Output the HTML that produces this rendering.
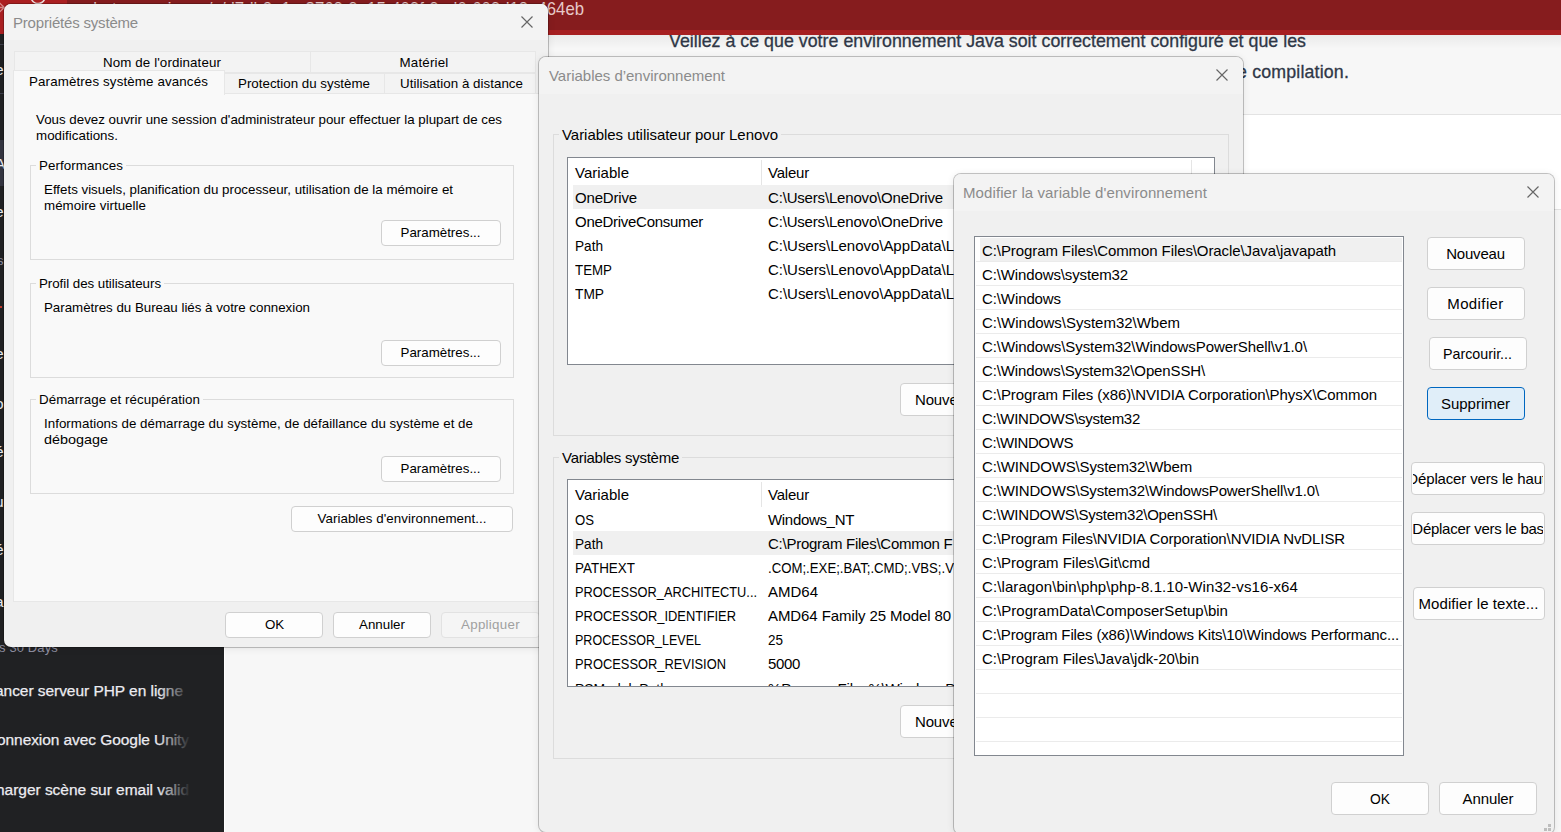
<!DOCTYPE html>
<html lang="fr"><head><meta charset="utf-8"><title>Variables d’environnement</title>
<style>

*{box-sizing:border-box;margin:0;padding:0}
html,body{width:1561px;height:832px;overflow:hidden;background:#f7f7f7}
body{position:relative;font-family:"Liberation Sans",sans-serif;font-size:15px;line-height:21px;color:#000}
div,span{position:absolute}
.t{white-space:pre}
.dlg{border:1px solid rgba(0,0,0,.22);border-radius:8px;background:#f0f0f0;background-clip:padding-box;box-shadow:0 1px 7px rgba(0,0,0,.08)}
.btn{background:#fdfdfd;border:1px solid #d0d0d0;border-radius:4px}
.btn.foc{background:#e0eef9;border-color:#0067c0}
.btn.dis{background:#f5f5f5;border-color:#e2e2e2}
.grp{border:1px solid #dcdcdc}
.lv{background:#fff;border:1px solid #82878f}
.sep{background:#ebebeb;height:1px}

</style></head><body>
<div style="left:0px;top:34px;width:1561px;height:80px;background:#f7f7f7"></div>
<div style="left:0px;top:114px;width:1561px;height:1px;background:#e3e3e3"></div>
<div style="left:0px;top:115px;width:1561px;height:717px;background:#fff"></div>
<div style="left:1548px;top:209px;width:13px;height:623px;background:#f7f7f7;border-top:1px solid #e3e3e3"></div>
<span class="t" style="left:669.00px;top:29.2px;font-size:17.8px;line-height:25px;color:#2f3747;letter-spacing:0.018px;-webkit-text-stroke:.3px #2f3747;">Veillez à ce que votre environnement Java soit correctement configuré et que les</span>
<span class="t" style="left:1237.00px;top:60.2px;font-size:17.8px;line-height:25px;color:#2f3747;letter-spacing:0.163px;-webkit-text-stroke:.3px #2f3747;">e compilation.</span>
<div style="left:0px;top:35px;width:1561px;height:14px;background:linear-gradient(rgba(0,0,0,.05),rgba(0,0,0,0))"></div>
<div style="left:0px;top:0px;width:1561px;height:30px;background:#861c1e"></div>
<div style="left:0px;top:30px;width:1561px;height:5px;background:#a61f21"></div>
<div style="left:0px;top:0px;width:67px;height:35px;background:#ad2022"></div>
<span class="t" style="left:85.00px;top:-5.5px;font-size:19px;line-height:27px;color:#e6c9c9;transform:scaleX(0.8813);transform-origin:0 0;">chat.openai.com/c/d7db2a1e-8763-9e15-409f-9ad0-609d13e464eb</span>
<svg style="position:absolute;left:29px;top:-12px" width="18" height="18" viewBox="0 0 18 18"><path d="M15 5A7 7 0 1 0 16 9M15 0V5H10" stroke="#f0dede" stroke-width="1.6" fill="none"/></svg>
<svg style="position:absolute;left:-8px;top:0" width="14" height="16" viewBox="-8 0 14 16"><path d="M-2 1.5 4.3 7.5-2 13.5M-6 7.5H4.3M-2 1.5-8 7.5-2 13.5" stroke="#d98a8a" stroke-width="1.3" fill="none"/></svg>
<div style="left:0px;top:34px;width:224px;height:798px;background:#202123"></div>
<div style="left:224px;top:34px;width:320px;height:798px;background:#f7f7f7;border-left:1px solid #fff"></div>
<div style="left:0px;top:44px;width:224px;height:1px;background:#3e3f4b"></div>
<div style="left:0px;top:93px;width:224px;height:1px;background:#3e3f4b"></div>
<div style="left:0px;top:140px;width:224px;height:46px;background:#343541"></div>
<span class="t" style="left:-5.00px;top:59px;font-size:15.5px;line-height:22px;color:#ececf1;">e</span>
<span class="t" style="left:-5.00px;top:153px;font-size:15.5px;line-height:22px;color:#ececf1;">A</span>
<span class="t" style="left:-5.00px;top:201px;font-size:15.5px;line-height:22px;color:#ececf1;">e</span>
<span class="t" style="left:-5.00px;top:342.5px;font-size:15.5px;line-height:22px;color:#ececf1;">e</span>
<span class="t" style="left:-5.00px;top:392.5px;font-size:15.5px;line-height:22px;color:#ececf1;">o</span>
<span class="t" style="left:-5.00px;top:441px;font-size:15.5px;line-height:22px;color:#ececf1;">é</span>
<span class="t" style="left:-5.00px;top:490.5px;font-size:15.5px;line-height:22px;color:#ececf1;">u</span>
<span class="t" style="left:-5.00px;top:539px;font-size:15.5px;line-height:22px;color:#ececf1;">é</span>
<span class="t" style="left:-5.00px;top:590.5px;font-size:15.5px;line-height:22px;color:#ececf1;">a</span>
<span class="t" style="left:-3.00px;top:252px;font-size:13px;line-height:18px;color:#8e8ea0;">s</span>
<div style="left:0px;top:306px;width:2px;height:2px;background:#c0392b"></div>
<span class="t" style="left:-1.00px;top:639px;font-size:13px;line-height:18px;color:#8e8ea0;letter-spacing:0.132px;">s 30 Days</span>
<span class="t" style="left:-5.00px;top:679.5px;font-size:15.5px;line-height:22px;color:#ececf1;letter-spacing:-0.049px;-webkit-text-stroke:.25px #ececf1;">ancer serveur PHP en ligne</span>
<span class="t" style="left:-3.00px;top:729px;font-size:15.5px;line-height:22px;color:#ececf1;letter-spacing:-0.072px;-webkit-text-stroke:.25px #ececf1;">onnexion avec Google Unity</span>
<span class="t" style="left:-4.00px;top:778.5px;font-size:15.5px;line-height:22px;color:#ececf1;letter-spacing:-0.030px;-webkit-text-stroke:.25px #ececf1;">harger scène sur email valid</span>
<div style="left:158px;top:670px;width:66px;height:140px;background:linear-gradient(90deg,rgba(32,33,35,0),#202123 50%)"></div>
<div class="dlg" style="left:3px;top:3px;width:546px;height:645px;overflow:hidden;">
<div style="left:0px;top:0px;width:544px;height:36px;background:#f3f3f3"></div>
</div>
<span class="t" style="left:13.00px;top:11.5px;color:#8b8b8b;letter-spacing:-0.188px;">Propriétés système</span>
<svg style="position:absolute;left:521px;top:16px" width="12" height="12" viewBox="0 0 12 12"><path d="M0.5 0.5 11.5 11.5M11.5 0.5 0.5 11.5" stroke="#666" stroke-width="1.15" fill="none"/></svg>
<div style="left:14px;top:51px;width:297px;height:22px;background:#f3f3f3;border:1px solid #e7e7e7"></div>
<div style="left:310px;top:51px;width:226px;height:22px;background:#f3f3f3;border:1px solid #e7e7e7"></div>
<span class="t" style="left:103.00px;top:52.5px;font-size:13.33px;line-height:19px;letter-spacing:0.110px;">Nom de l'ordinateur</span>
<span class="t" style="left:399.50px;top:52.5px;font-size:13.33px;line-height:19px;letter-spacing:0.199px;">Matériel</span>
<div style="left:224px;top:73px;width:161px;height:21px;background:#f3f3f3;border:1px solid #e7e7e7"></div>
<div style="left:384px;top:73px;width:152px;height:21px;background:#f3f3f3;border:1px solid #e7e7e7"></div>
<span class="t" style="left:238.00px;top:73.5px;font-size:13.33px;line-height:19px;letter-spacing:0.006px;">Protection du système</span>
<span class="t" style="left:400.00px;top:73.5px;font-size:13.33px;line-height:19px;letter-spacing:0.034px;">Utilisation à distance</span>
<div style="left:13px;top:93px;width:528px;height:509px;background:#f9f9f9;border:1px solid #e7e7e7"></div>
<div style="left:13px;top:70px;width:212px;height:25px;background:#f9f9f9;border:1px solid #e7e7e7;border-bottom:none"></div>
<span class="t" style="left:29.00px;top:71.5px;font-size:13.33px;line-height:19px;letter-spacing:0.132px;">Paramètres système avancés</span>
<span class="t" style="left:36.00px;top:109.5px;font-size:13.33px;line-height:19px;letter-spacing:-0.001px;">Vous devez ouvrir une session d'administrateur pour effectuer la plupart de ces</span>
<span class="t" style="left:36.00px;top:125.5px;font-size:13.33px;line-height:19px;letter-spacing:0.036px;">modifications.</span>
<div class="grp" style="left:30px;top:165px;width:484px;height:95px;"></div>
<div style="left:36px;top:163px;width:90px;height:5px;background:#f9f9f9"></div>
<span class="t" style="left:39.00px;top:155.8px;font-size:13.33px;line-height:19px;letter-spacing:0.086px;">Performances</span>
<span class="t" style="left:44.00px;top:179.5px;font-size:13.33px;line-height:19px;letter-spacing:-0.006px;">Effets visuels, planification du processeur, utilisation de la mémoire et</span>
<span class="t" style="left:44.00px;top:195.5px;font-size:13.33px;line-height:19px;letter-spacing:0.030px;">mémoire virtuelle</span>
<div class="btn" style="left:381px;top:220px;width:120px;height:26px;"></div>
<span class="t" style="left:400.50px;top:223px;font-size:13.33px;line-height:19px;letter-spacing:0.000px;">Paramètres...</span>
<div class="grp" style="left:30px;top:283px;width:484px;height:95px;"></div>
<div style="left:36px;top:281px;width:128px;height:5px;background:#f9f9f9"></div>
<span class="t" style="left:39.00px;top:273.8px;font-size:13.33px;line-height:19px;letter-spacing:-0.042px;">Profil des utilisateurs</span>
<span class="t" style="left:44.00px;top:297.5px;font-size:13.33px;line-height:19px;letter-spacing:-0.017px;">Paramètres du Bureau liés à votre connexion</span>
<div class="btn" style="left:381px;top:340px;width:120px;height:26px;"></div>
<span class="t" style="left:400.50px;top:343px;font-size:13.33px;line-height:19px;letter-spacing:0.000px;">Paramètres...</span>
<div class="grp" style="left:30px;top:399px;width:484px;height:95px;"></div>
<div style="left:36px;top:397px;width:167px;height:5px;background:#f9f9f9"></div>
<span class="t" style="left:39.00px;top:389.8px;font-size:13.33px;line-height:19px;letter-spacing:0.069px;">Démarrage et récupération</span>
<span class="t" style="left:44.00px;top:413.5px;font-size:13.33px;line-height:19px;letter-spacing:0.033px;">Informations de démarrage du système, de défaillance du système et de</span>
<span class="t" style="left:44.00px;top:429.5px;font-size:13.33px;line-height:19px;transform:scaleX(1.0790);transform-origin:0 0;">débogage</span>
<div class="btn" style="left:381px;top:456px;width:120px;height:26px;"></div>
<span class="t" style="left:400.50px;top:459px;font-size:13.33px;line-height:19px;letter-spacing:0.000px;">Paramètres...</span>
<div class="btn" style="left:291px;top:506px;width:222px;height:26px;"></div>
<span class="t" style="left:317.50px;top:509px;font-size:13.33px;line-height:19px;letter-spacing:0.053px;">Variables d'environnement...</span>
<div class="btn" style="left:225px;top:612px;width:98px;height:26px;"></div>
<span class="t" style="left:265.00px;top:614.9px;font-size:13.33px;line-height:19px;letter-spacing:-0.133px;">OK</span>
<div class="btn" style="left:333px;top:612px;width:98px;height:26px;"></div>
<span class="t" style="left:359.00px;top:614.9px;font-size:13.33px;line-height:19px;letter-spacing:0.007px;">Annuler</span>
<div class="btn dis" style="left:441px;top:612px;width:99px;height:26px;"></div>
<span class="t" style="left:461.00px;top:614.9px;font-size:13.33px;line-height:19px;color:#a0a0a0;letter-spacing:0.297px;">Appliquer</span>
<div class="dlg" style="left:538px;top:56px;width:706px;height:777px;overflow:hidden;">
<div style="left:-1px;top:-1px;width:706px;height:38px;background:#f3f3f3"></div>
</div>
<span class="t" style="left:549.00px;top:65px;color:#8b8b8b;letter-spacing:-0.020px;">Variables d’environnement</span>
<svg style="position:absolute;left:1216px;top:69px" width="12" height="12" viewBox="0 0 12 12"><path d="M0.5 0.5 11.5 11.5M11.5 0.5 0.5 11.5" stroke="#666" stroke-width="1.15" fill="none"/></svg>
<div class="grp" style="left:553px;top:134px;width:676px;height:302px;"></div>
<div style="left:559px;top:132px;width:222px;height:5px;background:#f0f0f0"></div>
<span class="t" style="left:562.00px;top:124.3px;letter-spacing:-0.041px;">Variables utilisateur pour Lenovo</span>
<div class="lv" style="left:567px;top:157px;width:648px;height:208px;overflow:hidden;">
<div style="left:193px;top:2px;width:1px;height:25px;background:#e5e5e5"></div>
<div style="left:623px;top:2px;width:1px;height:25px;background:#e5e5e5"></div>
<span class="t" style="left:7.00px;top:4px;letter-spacing:0.010px;">Variable</span>
<span class="t" style="left:200.00px;top:4px;letter-spacing:-0.208px;">Valeur</span>
<div style="left:5px;top:27px;width:640px;height:24px;background:#f0f0f0"></div>
<span class="t" style="left:7.00px;top:28.5px;letter-spacing:-0.170px;">OneDrive</span>
<span class="t" style="left:200.00px;top:28.5px;letter-spacing:-0.177px;">C:\Users\Lenovo\OneDrive</span>
<span class="t" style="left:7.00px;top:52.5px;letter-spacing:-0.284px;">OneDriveConsumer</span>
<span class="t" style="left:200.00px;top:52.5px;letter-spacing:-0.177px;">C:\Users\Lenovo\OneDrive</span>
<span class="t" style="left:7.00px;top:76.5px;transform:scaleX(0.9073);transform-origin:0 0;">Path</span>
<span class="t" style="left:200.00px;top:76.5px;letter-spacing:-0.031px;">C:\Users\Lenovo\AppData\L</span>
<span class="t" style="left:7.00px;top:100.5px;transform:scaleX(0.8879);transform-origin:0 0;">TEMP</span>
<span class="t" style="left:200.00px;top:100.5px;letter-spacing:-0.031px;">C:\Users\Lenovo\AppData\L</span>
<span class="t" style="left:7.00px;top:124.5px;transform:scaleX(0.9156);transform-origin:0 0;">TMP</span>
<span class="t" style="left:200.00px;top:124.5px;letter-spacing:-0.031px;">C:\Users\Lenovo\AppData\L</span>
</div>
<div class="btn" style="left:900px;top:383px;width:98px;height:33px;"></div>
<span class="t" style="left:915.00px;top:389.4px;letter-spacing:-0.150px;">Nouveau</span>
<div class="grp" style="left:553px;top:457px;width:676px;height:302px;"></div>
<div style="left:559px;top:455px;width:123px;height:5px;background:#f0f0f0"></div>
<span class="t" style="left:562.00px;top:447.3px;letter-spacing:-0.261px;">Variables système</span>
<div class="lv" style="left:567px;top:479px;width:648px;height:208px;overflow:hidden;">
<div style="left:193px;top:2px;width:1px;height:25px;background:#e5e5e5"></div>
<span class="t" style="left:7.00px;top:4px;letter-spacing:0.010px;">Variable</span>
<span class="t" style="left:200.00px;top:4px;letter-spacing:-0.208px;">Valeur</span>
<div style="left:5px;top:51px;width:640px;height:24px;background:#f0f0f0"></div>
<span class="t" style="left:7.00px;top:28.5px;transform:scaleX(0.8761);transform-origin:0 0;">OS</span>
<span class="t" style="left:200.00px;top:28.5px;letter-spacing:-0.319px;">Windows_NT</span>
<span class="t" style="left:7.00px;top:52.5px;transform:scaleX(0.9073);transform-origin:0 0;">Path</span>
<span class="t" style="left:200.00px;top:52.5px;letter-spacing:-0.255px;">C:\Program Files\Common F</span>
<span class="t" style="left:7.00px;top:76.5px;transform:scaleX(0.8961);transform-origin:0 0;">PATHEXT</span>
<span class="t" style="left:200.00px;top:76.5px;transform:scaleX(0.8797);transform-origin:0 0;">.COM;.EXE;.BAT;.CMD;.VBS;.V</span>
<span class="t" style="left:7.00px;top:100.5px;transform:scaleX(0.8530);transform-origin:0 0;">PROCESSOR_ARCHITECTU...</span>
<span class="t" style="left:200.00px;top:100.5px;letter-spacing:-0.006px;">AMD64</span>
<span class="t" style="left:7.00px;top:124.5px;transform:scaleX(0.8585);transform-origin:0 0;">PROCESSOR_IDENTIFIER</span>
<span class="t" style="left:200.00px;top:124.5px;letter-spacing:-0.087px;">AMD64 Family 25 Model 80</span>
<span class="t" style="left:7.00px;top:148.5px;transform:scaleX(0.8350);transform-origin:0 0;">PROCESSOR_LEVEL</span>
<span class="t" style="left:200.00px;top:148.5px;transform:scaleX(0.8989);transform-origin:0 0;">25</span>
<span class="t" style="left:7.00px;top:172.5px;transform:scaleX(0.8585);transform-origin:0 0;">PROCESSOR_REVISION</span>
<span class="t" style="left:200.00px;top:172.5px;letter-spacing:-0.344px;">5000</span>
<span class="t" style="left:7.00px;top:197.7px;transform:scaleX(0.9293);transform-origin:0 0;">PSModulePath</span>
<span class="t" style="left:200.00px;top:197.7px;letter-spacing:-0.161px;">%ProgramFiles%\WindowsPowerShell</span>
</div>
<div class="btn" style="left:900px;top:705px;width:98px;height:33px;"></div>
<span class="t" style="left:915.00px;top:711.4px;letter-spacing:-0.150px;">Nouveau</span>
<div class="dlg" style="left:953px;top:173px;width:602px;height:662px;overflow:hidden;">
<div style="left:-1px;top:-1px;width:602px;height:38px;background:#f3f3f3"></div>
</div>
<span class="t" style="left:963.00px;top:182px;color:#8b8b8b;letter-spacing:0.097px;">Modifier la variable d'environnement</span>
<svg style="position:absolute;left:1527px;top:186px" width="12" height="12" viewBox="0 0 12 12"><path d="M0.5 0.5 11.5 11.5M11.5 0.5 0.5 11.5" stroke="#666" stroke-width="1.15" fill="none"/></svg>
<div class="lv" style="left:974px;top:236px;width:430px;height:520px;overflow:hidden;">
<div style="left:5px;top:1px;width:422px;height:24px;background:#f0f0f0"></div>
<div class="sep" style="left:1px;top:24px;width:426px;height:1px;"></div>
<div class="sep" style="left:1px;top:48px;width:426px;height:1px;"></div>
<div class="sep" style="left:1px;top:72px;width:426px;height:1px;"></div>
<div class="sep" style="left:1px;top:96px;width:426px;height:1px;"></div>
<div class="sep" style="left:1px;top:120px;width:426px;height:1px;"></div>
<div class="sep" style="left:1px;top:144px;width:426px;height:1px;"></div>
<div class="sep" style="left:1px;top:168px;width:426px;height:1px;"></div>
<div class="sep" style="left:1px;top:192px;width:426px;height:1px;"></div>
<div class="sep" style="left:1px;top:216px;width:426px;height:1px;"></div>
<div class="sep" style="left:1px;top:240px;width:426px;height:1px;"></div>
<div class="sep" style="left:1px;top:264px;width:426px;height:1px;"></div>
<div class="sep" style="left:1px;top:288px;width:426px;height:1px;"></div>
<div class="sep" style="left:1px;top:312px;width:426px;height:1px;"></div>
<div class="sep" style="left:1px;top:336px;width:426px;height:1px;"></div>
<div class="sep" style="left:1px;top:360px;width:426px;height:1px;"></div>
<div class="sep" style="left:1px;top:384px;width:426px;height:1px;"></div>
<div class="sep" style="left:1px;top:408px;width:426px;height:1px;"></div>
<div class="sep" style="left:1px;top:432px;width:426px;height:1px;"></div>
<div class="sep" style="left:1px;top:456px;width:426px;height:1px;"></div>
<div class="sep" style="left:1px;top:480px;width:426px;height:1px;"></div>
<div class="sep" style="left:1px;top:504px;width:426px;height:1px;"></div>
<span class="t" style="left:7.00px;top:2.5px;letter-spacing:-0.089px;">C:\Program Files\Common Files\Oracle\Java\javapath</span>
<span class="t" style="left:7.00px;top:26.5px;letter-spacing:-0.125px;">C:\Windows\system32</span>
<span class="t" style="left:7.00px;top:50.5px;letter-spacing:-0.103px;">C:\Windows</span>
<span class="t" style="left:7.00px;top:74.5px;letter-spacing:-0.016px;">C:\Windows\System32\Wbem</span>
<span class="t" style="left:7.00px;top:98.5px;letter-spacing:-0.081px;">C:\Windows\System32\WindowsPowerShell\v1.0\</span>
<span class="t" style="left:7.00px;top:122.5px;letter-spacing:-0.134px;">C:\Windows\System32\OpenSSH\</span>
<span class="t" style="left:7.00px;top:146.5px;letter-spacing:-0.080px;">C:\Program Files (x86)\NVIDIA Corporation\PhysX\Common</span>
<span class="t" style="left:7.00px;top:170.5px;letter-spacing:-0.282px;">C:\WINDOWS\system32</span>
<span class="t" style="left:7.00px;top:194.5px;letter-spacing:-0.400px;">C:\WINDOWS</span>
<span class="t" style="left:7.00px;top:218.5px;letter-spacing:-0.140px;">C:\WINDOWS\System32\Wbem</span>
<span class="t" style="left:7.00px;top:242.5px;letter-spacing:-0.150px;">C:\WINDOWS\System32\WindowsPowerShell\v1.0\</span>
<span class="t" style="left:7.00px;top:266.5px;letter-spacing:-0.241px;">C:\WINDOWS\System32\OpenSSH\</span>
<span class="t" style="left:7.00px;top:290.5px;letter-spacing:-0.109px;">C:\Program Files\NVIDIA Corporation\NVIDIA NvDLISR</span>
<span class="t" style="left:7.00px;top:314.5px;letter-spacing:-0.016px;">C:\Program Files\Git\cmd</span>
<span class="t" style="left:7.00px;top:338.5px;letter-spacing:0.094px;">C:\laragon\bin\php\php-8.1.10-Win32-vs16-x64</span>
<span class="t" style="left:7.00px;top:362.5px;letter-spacing:0.027px;">C:\ProgramData\ComposerSetup\bin</span>
<span class="t" style="left:7.00px;top:386.5px;letter-spacing:-0.135px;">C:\Program Files (x86)\Windows Kits\10\Windows Performanc...</span>
<span class="t" style="left:7.00px;top:410.5px;letter-spacing:-0.019px;">C:\Program Files\Java\jdk-20\bin</span>
</div>
<div class="btn" style="left:1427px;top:237px;width:98px;height:33px;"></div>
<span class="t" style="left:1446.25px;top:243.3px;letter-spacing:-0.221px;">Nouveau</span>
<div class="btn" style="left:1427px;top:287px;width:98px;height:33px;"></div>
<span class="t" style="left:1447.25px;top:293.3px;letter-spacing:0.393px;">Modifier</span>
<div class="btn" style="left:1429px;top:337px;width:98px;height:33px;"></div>
<span class="t" style="left:1443.00px;top:343.3px;transform:scaleX(0.9513);transform-origin:0 0;">Parcourir...</span>
<div class="btn foc" style="left:1427px;top:387px;width:98px;height:33px;"></div>
<span class="t" style="left:1441.00px;top:393.3px;letter-spacing:-0.023px;">Supprimer</span>
<div class="btn" style="left:1411px;top:462px;width:134px;height:33px;"></div>
<div style="left:1413px;top:464px;width:130px;height:29px;overflow:hidden;">
<span class="t" style="left:-5.70px;top:4.3px;letter-spacing:-0.150px;">Déplacer vers le haut</span>
</div>
<div class="btn" style="left:1411px;top:512px;width:134px;height:33px;"></div>
<div style="left:1413px;top:514px;width:130px;height:29px;overflow:hidden;">
<span class="t" style="left:-0.70px;top:4.3px;letter-spacing:-0.262px;">Déplacer vers le bas</span>
</div>
<div class="btn" style="left:1413px;top:587px;width:132px;height:33px;"></div>
<span class="t" style="left:1418.50px;top:593.3px;letter-spacing:0.080px;">Modifier le texte...</span>
<div class="btn" style="left:1331px;top:782px;width:98px;height:33px;"></div>
<span class="t" style="left:1370.00px;top:788.3px;transform:scaleX(0.9222);transform-origin:0 0;">OK</span>
<div class="btn" style="left:1439px;top:782px;width:98px;height:33px;"></div>
<span class="t" style="left:1462.50px;top:788.3px;letter-spacing:-0.100px;">Annuler</span>
<div style="left:1548px;top:824px;width:3px;height:3px;background:#bdbdbd"></div>
<div style="left:1544px;top:828px;width:3px;height:3px;background:#bdbdbd"></div>
<div style="left:1548px;top:828px;width:3px;height:3px;background:#bdbdbd"></div>
</body></html>
